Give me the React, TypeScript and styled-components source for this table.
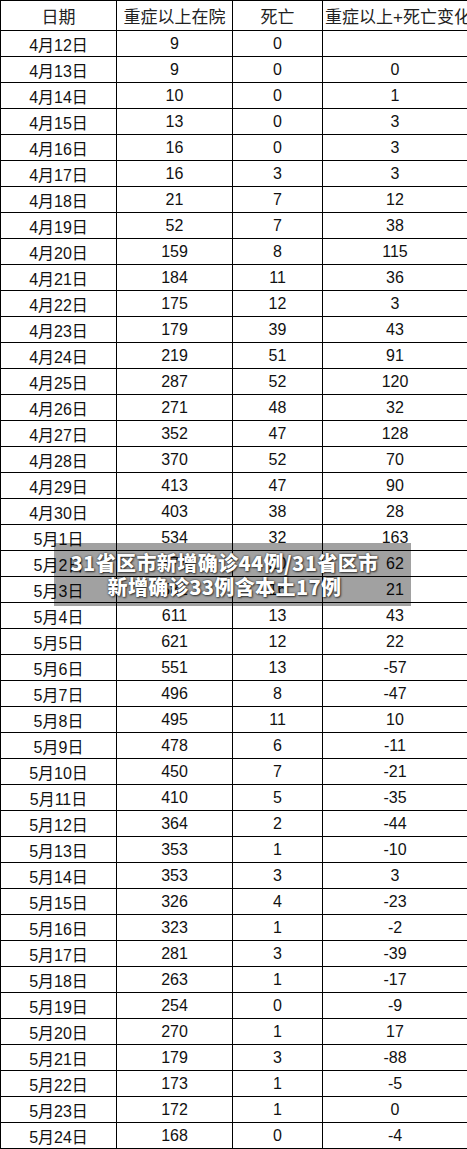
import styled, { createGlobalStyle } from "styled-components";

type Row = [string, number, number, number | null];

const rows: Row[] = [
  ["4月12日", 9, 0, null],
  ["4月13日", 9, 0, 0],
  ["4月14日", 10, 0, 1],
  ["4月15日", 13, 0, 3],
  ["4月16日", 16, 0, 3],
  ["4月17日", 16, 3, 3],
  ["4月18日", 21, 7, 12],
  ["4月19日", 52, 7, 38],
  ["4月20日", 159, 8, 115],
  ["4月21日", 184, 11, 36],
  ["4月22日", 175, 12, 3],
  ["4月23日", 179, 39, 43],
  ["4月24日", 219, 51, 91],
  ["4月25日", 287, 52, 120],
  ["4月26日", 271, 48, 32],
  ["4月27日", 352, 47, 128],
  ["4月28日", 370, 52, 70],
  ["4月29日", 413, 47, 90],
  ["4月30日", 403, 38, 28],
  ["5月1日", 534, 32, 163],
  ["5月2日", 576, 20, 62],
  ["5月3日", 581, 16, 21],
  ["5月4日", 611, 13, 43],
  ["5月5日", 621, 12, 22],
  ["5月6日", 551, 13, -57],
  ["5月7日", 496, 8, -47],
  ["5月8日", 495, 11, 10],
  ["5月9日", 478, 6, -11],
  ["5月10日", 450, 7, -21],
  ["5月11日", 410, 5, -35],
  ["5月12日", 364, 2, -44],
  ["5月13日", 353, 1, -10],
  ["5月14日", 353, 3, 3],
  ["5月15日", 326, 4, -23],
  ["5月16日", 323, 1, -2],
  ["5月17日", 281, 3, -39],
  ["5月18日", 263, 1, -17],
  ["5月19日", 254, 0, -9],
  ["5月20日", 270, 1, 17],
  ["5月21日", 179, 3, -88],
  ["5月22日", 173, 1, -5],
  ["5月23日", 172, 1, 0],
  ["5月24日", 168, 0, -4],
];

const GlobalStyle = createGlobalStyle`
  body {
    margin: 0;
    background: #fff;
  }
`;

const Page = styled.div`
  position: relative;
  width: 467px;
  height: 1149px;
  overflow: hidden;
`;

const Table = styled.table`
  width: 467px;
  table-layout: fixed;
  border-collapse: collapse;
  font-family: "Liberation Sans", "Noto Sans CJK SC", sans-serif;
  font-size: 16px;
  color: #111;
`;

const HeadCell = styled.th<{ $clip?: boolean }>`
  height: 29px;
  padding: 0;
  border: 1px solid #000;
  font-weight: normal;
  font-size: 17px;
  color: #222;
  white-space: nowrap;
  overflow: hidden;
  text-align: ${(p) => (p.$clip ? "left" : "center")};
  padding-left: ${(p) => (p.$clip ? "2px" : "0")};
`;

const Cell = styled.td`
  height: 25px;
  padding: 0;
  border: 1px solid #000;
  text-align: center;
  white-space: nowrap;
`;

const Banner = styled.div`
  position: absolute;
  left: 54px;
  top: 543px;
  width: 357px;
  height: 63px;
  padding-right: 16px;
  box-sizing: border-box;
  background: rgba(0, 0, 0, 0.37);
  display: flex;
  flex-direction: column;
  align-items: center;
  justify-content: center;
  color: #fff;
  font-family: "Noto Sans CJK SC", "Noto Sans", sans-serif;
  font-weight: 900;
  font-size: 20px;
  line-height: 24px;
  letter-spacing: 0.4px;
  text-shadow: 0 0 2px rgba(0, 0, 0, 0.75), 1px 1px 2px rgba(0, 0, 0, 0.6);
`;

export default function App() {
  return (
    <Page>
      <GlobalStyle />
      <Table>
        <colgroup>
          <col style={{ width: 116 }} />
          <col style={{ width: 116 }} />
          <col style={{ width: 90 }} />
          <col style={{ width: 145 }} />
        </colgroup>
        <thead>
          <tr>
            <HeadCell>日期</HeadCell>
            <HeadCell>重症以上在院</HeadCell>
            <HeadCell>死亡</HeadCell>
            <HeadCell $clip>重症以上+死亡变化</HeadCell>
          </tr>
        </thead>
        <tbody>
          {rows.map(([date, severe, death, change]) => (
            <tr key={date}>
              <Cell>{date}</Cell>
              <Cell>{severe}</Cell>
              <Cell>{death}</Cell>
              <Cell>{change === null ? "" : change}</Cell>
            </tr>
          ))}
        </tbody>
      </Table>
      <Banner>
        <div>31省区市新增确诊44例/31省区市</div>
        <div>新增确诊33例含本土17例</div>
      </Banner>
    </Page>
  );
}
